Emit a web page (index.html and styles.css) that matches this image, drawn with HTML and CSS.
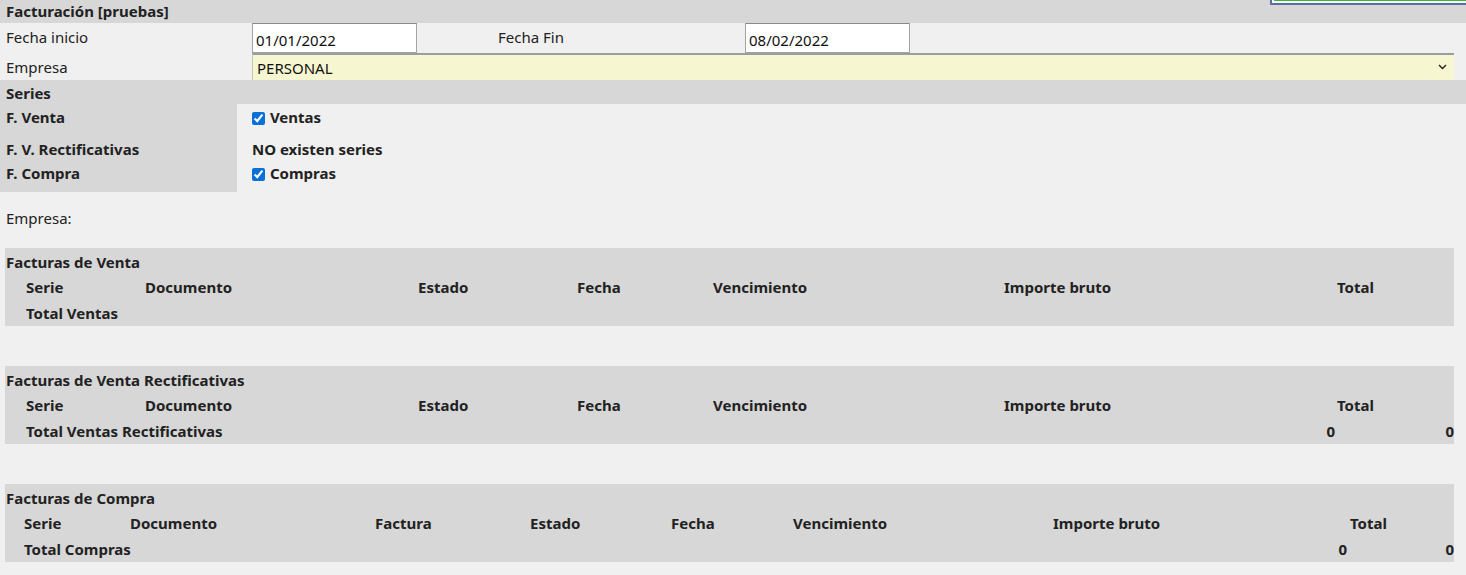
FILE: index.html
```html
<!DOCTYPE html>
<html lang="es">
    <head>
        <meta charset="utf-8">
        <title>Facturación [pruebas]</title>
        <link rel="stylesheet" href="styles.css">
    </head>
    <body>
        <!-- Cabecera -->
        <div class="titlebar">
            Facturación [pruebas]
            <div class="corner-box"></div>
        </div>

        <!-- Filtros -->
        <div class="form-row dates">
            <label class="lbl">Fecha inicio</label>
            <input class="date" type="text" value="01/01/2022">
            <label class="lbl lbl-fin">Fecha Fin</label>
            <input class="date" type="text" value="08/02/2022">
        </div>
        <div class="form-row company">
            <label class="lbl">Empresa</label>
            <div class="select-wrap">
                <select class="company-select">
                    <option>PERSONAL</option>
                </select>
                <svg class="chevron" width="9" height="6" viewBox="0 0 9 6">
                    <path d="M1 1 L4.5 4.5 L8 1" fill="none" stroke="#222" stroke-width="1.4"/>
                </svg>
            </div>
        </div>

        <!-- Series -->
        <div class="section-bar">Series</div>
        <div class="series">
            <div class="series-lbl tall">F. Venta</div>
            <div class="series-val tall"><label><input type="checkbox" checked> Ventas</label></div>
            <div class="series-lbl short">F. V. Rectificativas</div>
            <div class="series-val short">NO existen series</div>
            <div class="series-lbl tall">F. Compra</div>
            <div class="series-val tall"><label><input type="checkbox" checked> Compras</label></div>
        </div>

        <div class="empresa-line">Empresa:</div>

        <!-- Facturas de venta -->
        <div class="invoice-table sales">
            <div class="tbl-title">Facturas de Venta</div>
            <div class="tbl-row">
                <span></span>
                <span>Serie</span>
                <span>Documento</span>
                <span>Estado</span>
                <span>Fecha</span>
                <span>Vencimiento</span>
                <span>Importe bruto</span>
                <span>Total</span>
                <span></span>
            </div>
            <div class="tbl-total">
                <span class="total-lbl">Total Ventas</span>
            </div>
        </div>

        <!-- Facturas rectificativas -->
        <div class="invoice-table sales">
            <div class="tbl-title">Facturas de Venta Rectificativas</div>
            <div class="tbl-row">
                <span></span>
                <span>Serie</span>
                <span>Documento</span>
                <span>Estado</span>
                <span>Fecha</span>
                <span>Vencimiento</span>
                <span>Importe bruto</span>
                <span>Total</span>
                <span></span>
            </div>
            <div class="tbl-total">
                <span class="total-lbl">Total Ventas Rectificativas</span>
                <span class="num num-a">0</span>
                <span class="num num-b">0</span>
            </div>
        </div>

        <!-- Facturas de compra -->
        <div class="invoice-table purchases">
            <div class="tbl-title">Facturas de Compra</div>
            <div class="tbl-row">
                <span></span>
                <span>Serie</span>
                <span>Documento</span>
                <span>Factura</span>
                <span>Estado</span>
                <span>Fecha</span>
                <span>Vencimiento</span>
                <span>Importe bruto</span>
                <span>Total</span>
                <span></span>
            </div>
            <div class="tbl-total">
                <span class="total-lbl">Total Compras</span>
                <span class="num num-a">0</span>
                <span class="num num-b">0</span>
            </div>
        </div>
    </body>
</html>
```

FILE: styles.css
```css
* {
    box-sizing: border-box;
    font-family: "Noto Sans", "Open Sans", sans-serif;
}

body {
    margin: 0;
    background-color: #f0f0f0;
    color: #222;
    font-size: 15px;
}

.titlebar {
    position: relative;
    height: 23px;
    line-height: 22px;
    padding-left: 6px;
    background-color: #d7d7d7;
    font-weight: bold;
}

/* pedazo de la ventana de encima */
.corner-box {
    position: absolute;
    left: 1270px;
    top: -20px;
    right: -10px;
    height: 25px;
    border: 2px solid #5d6ea6;
    background-color: #fff;
    padding: 2px;
}

.corner-box::after {
    content: "";
    display: block;
    height: 100%;
    background-color: #37b637;
}

.form-row {
    display: flex;
    align-items: flex-start;
}

.dates {
    height: 30px;
}

.company {
    height: 27px;
}

.lbl {
    width: 252px;
    padding-left: 6px;
    line-height: 28px;
}

.lbl-fin {
    width: 247px;
    margin-left: 81px;
    padding-left: 0;
}

.date {
    width: 165px;
    height: 30px;
    border: 1px solid #a3a3a3;
    border-top-color: #8a8a8a;
    background-color: #fff;
    padding: 3px 3px 0;
    font-size: 15px;
    color: #111;
}

.select-wrap {
    position: relative;
    width: 1202px;
}

.company-select {
    appearance: none;
    -webkit-appearance: none;
    width: 100%;
    height: 27px;
    border: none;
    border-top: 2px solid #9d9d9d;
    border-left: 1px solid #c9c9b0;
    background-color: #f6f6d0;
    padding: 0 4px;
    font-size: 15px;
    color: #111;
}

.chevron {
    position: absolute;
    right: 7px;
    top: 11px;
}

.section-bar {
    height: 24px;
    line-height: 26px;
    padding-left: 6px;
    background-color: #d7d7d7;
    font-weight: bold;
}

.series {
    display: grid;
    grid-template-columns: 237px 1fr;
    font-weight: bold;
    line-height: 26px;
}

.series-lbl {
    background-color: #d7d7d7;
    padding-left: 6px;
}

.series-val {
    padding-left: 15px;
}

.tall {
    height: 32px;
}

.short {
    height: 24px;
}

.series-val input {
    accent-color: #0b6fd8;
    width: 13px;
    height: 13px;
    margin: 0 1px 0 0;
    vertical-align: -2px;
}

.empresa-line {
    height: 56px;
    padding: 16px 0 0 6px;
}

.invoice-table {
    width: 1449px;
    margin-left: 5px;
    margin-bottom: 40px;
    background-color: #d7d7d7;
    font-weight: bold;
    padding-top: 1px;
}

.tbl-title,
.tbl-row,
.tbl-total {
    height: 26px;
    line-height: 26px;
}

.tbl-title {
    padding-left: 1px;
    height: 25px;
}

.tbl-row {
    display: grid;
    white-space: nowrap;
}

.sales .tbl-row {
    grid-template-columns: 21px 119px 273px 159px 136px 291px 333px 117px 0;
}

.purchases .tbl-row {
    grid-template-columns: 19px 106px 245px 155px 141px 122px 260px 297px 104px 0;
}

.tbl-total {
    display: flex;
}

.total-lbl {
    padding-left: 21px;
    flex: 1;
}

.purchases .total-lbl {
    padding-left: 19px;
}

.num {
    text-align: right;
}

.num-a {
    width: 20px;
}

.sales .num-b {
    width: 119px;
}

.purchases .num-b {
    width: 107px;
}
```
